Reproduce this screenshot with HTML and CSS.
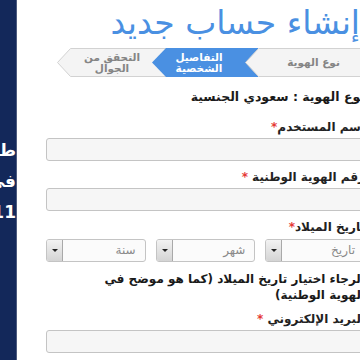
FILE: index.html
```html
<!DOCTYPE html>
<html lang="ar">
<head>
    <meta charset="UTF-8">
    <meta name="viewport" content="width=device-width, initial-scale=1.0">
    <title>إنشاء حساب جديد</title>
    <link rel="stylesheet" href="styles.css">
</head>
<body>
    <div class="page">
        <aside class="side" dir="rtl">
            <p>طريقة التسجيل</p>
            <p>في منصة أبشر</p>
            <p>1411</p>
        </aside>

        <main class="panel" dir="rtl">
            <h1>إنشاء حساب جديد</h1>

            <div class="steps">
                <div class="step done">
                    <svg class="shape" viewBox="0 0 120 29" preserveAspectRatio="none"><polygon points="13.5,0.5 120,0.5 120,28.5 13.5,28.5 0.5,14.5"/></svg>
                    <span>نوع الهوية</span>
                </div>
                <div class="step active">
                    <svg class="shape" viewBox="0 0 106 29" preserveAspectRatio="none"><polygon points="14,0 106,0 106,29 14,29 0,14.5"/></svg>
                    <span>التفاصيل<br>الشخصية</span>
                </div>
                <div class="step next">
                    <svg class="shape" viewBox="0 0 109 29" preserveAspectRatio="none"><polygon points="13.5,0.5 109,0.5 109,28.5 13.5,28.5 0.5,14.5"/></svg>
                    <span>التحقق من<br>الجوال</span>
                </div>
            </div>

            <p class="idtype">نوع الهوية : سعودي الجنسية</p>

            <div class="field">
                <label>اسم المستخدم<span class="req">*</span></label>
                <input type="text" class="box">
            </div>

            <div class="field">
                <label>رقم الهوية الوطنية <span class="req">*</span></label>
                <input type="text" class="box">
            </div>

            <div class="field">
                <label>تاريخ الميلاد<span class="req">*</span></label>
                <div class="dates">
                    <div class="select"><span class="value">تاريخ</span><span class="arrow"></span></div>
                    <div class="select"><span class="value">شهر</span><span class="arrow"></span></div>
                    <div class="select"><span class="value">سنة</span><span class="arrow"></span></div>
                </div>
                <p class="hint">الرجاء اختيار تاريخ الميلاد (كما هو موضح في الهوية الوطنية)</p>
            </div>

            <div class="field">
                <label>البريد الإلكتروني <span class="req">*</span></label>
                <input type="text" class="box">
            </div>
        </main>
    </div>
</body>
</html>
```

FILE: styles.css
```css
html, body {
    margin: 0;
    padding: 0;
    overflow: hidden;
    background: #ffffff;
}
body {
    font-family: "DejaVu Sans", sans-serif;
}
.page {
    display: flex;
    width: 380px;
    height: 360px;
}
.side {
    width: 17px;
    flex: none;
    background: #13285a;
    border-right: 1px solid #4d5b7e;
    overflow: hidden;
    padding-top: 135px;
    box-sizing: border-box;
}
.side p {
    margin: 0;
    color: #ffffff;
    font-weight: bold;
    font-size: 17px;
    line-height: 31px;
    white-space: nowrap;
    text-align: right;
    direction: rtl;
    width: 200px;
    margin-left: -186px;
}
.panel {
    flex: 1;
    padding: 0 15px 0 29px;
    overflow: hidden;
}
h1 {
    margin: 0;
    padding: 3px 5px 0 0;
    height: 45px;
    font-size: 33px;
    line-height: 40px;
    font-weight: normal;
    color: #4a90e2;
}
.steps {
    display: flex;
    height: 29px;
    margin: 0 0 12px 0;
}
.step {
    position: relative;
    height: 29px;
    display: flex;
    align-items: center;
    justify-content: center;
    box-sizing: border-box;
    padding: 0 13px 0 14px;
    font-size: 10.5px;
    line-height: 11px;
    font-weight: bold;
    text-align: center;
    color: #858585;
}
.step .shape {
    position: absolute;
    left: 0;
    top: 0;
    width: 100%;
    height: 100%;
}
.step span {
    position: relative;
}
.step polygon {
    fill: #f4f4f4;
    stroke: #d2d2d2;
    stroke-width: 1;
}
.step.done {
    width: 120px;
    z-index: 3;
    padding-left: 30px;
}
.step.active {
    width: 106px;
    margin-right: -13px;
    z-index: 2;
    color: #ffffff;
    padding-right: 26px;
}
.step.active polygon {
    fill: #4a90e2;
    stroke: none;
}
.step.next {
    width: 109px;
    margin-right: -14px;
    z-index: 1;
}
.idtype {
    margin: 0 0 14px 0;
    font-size: 12.5px;
    line-height: 16px;
    font-weight: bold;
    color: #1a1a1a;
}
.field {
    margin-bottom: 8px;
}
label {
    display: block;
    font-size: 12px;
    line-height: 16px;
    font-weight: bold;
    color: #222222;
    margin-bottom: 3px;
}
.req {
    color: #e53935;
}
.box {
    display: block;
    width: 100%;
    height: 23px;
    box-sizing: border-box;
    border: 1px solid #c4c4c4;
    border-radius: 3px;
    background: #f6f6f6;
    margin: 0;
}
.dates {
    display: grid;
    grid-template-columns: 1fr 1fr 1fr;
    gap: 10px;
    margin-top: 4px;
}
.select {
    display: flex;
    height: 23px;
    box-sizing: border-box;
    border: 1px solid #c4c4c4;
    border-radius: 3px;
    background: #fbfbfb;
    overflow: hidden;
}
.select .value {
    flex: 1;
    padding-right: 9px;
    text-align: right;
    font-size: 12px;
    line-height: 21px;
    color: #8a8a8a;
}
.select .arrow {
    width: 15px;
    flex: none;
    border-right: 1px solid #a9a9a9;
    background: linear-gradient(#f2f2f2, #d4d4d4);
    position: relative;
}
.select .arrow::after {
    content: "";
    position: absolute;
    left: 5px;
    top: 9px;
    border-left: 3px solid transparent;
    border-right: 3px solid transparent;
    border-top: 3px solid #222222;
}
.hint {
    margin: 9px 0 0 0;
    font-size: 12px;
    line-height: 16px;
    font-weight: bold;
    color: #1a1a1a;
    padding-left: 22px;
}
```
